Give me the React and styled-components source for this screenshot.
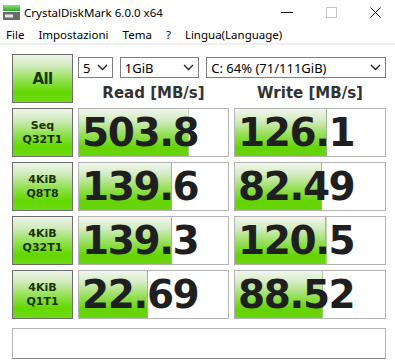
import React from 'react';
import styled, { createGlobalStyle } from 'styled-components';

const GlobalStyle = createGlobalStyle`
  html, body {
    margin: 0;
    padding: 0;
    background: #ffffff;
  }
  body {
    width: 395px;
    height: 363px;
    overflow: hidden;
    font-family: "Noto Sans", "Liberation Sans", sans-serif;
  }
`;

const Window = styled.div`
  width: 395px;
  height: 363px;
  background: #ffffff;
  display: flex;
  flex-direction: column;
`;

const TitleBar = styled.div`
  height: 25px;
  display: flex;
  align-items: center;
  padding-left: 3px;
`;

const Title = styled.span`
  margin-left: 4px;
  font-size: 11.5px;
  color: #000;
`;

const Caption = styled.div`
  margin-left: auto;
  display: flex;
  align-items: center;
  gap: 33px;
  padding-right: 14px;
`;

const MenuBar = styled.div`
  height: 18px;
  display: flex;
  align-items: center;
  gap: 14px;
  padding-left: 6px;
  border-bottom: 2px solid #f0f0f0;
`;

const MenuItem = styled.span`
  font-size: 11.5px;
  color: #000;
`;

const Main = styled.div`
  padding: 9px 0 0 12px;
`;

const Grid = styled.div`
  display: grid;
  grid-template-columns: 61px 151px 152px;
  grid-auto-rows: 49px;
  column-gap: 5px;
  row-gap: 5px;
`;

const GreenButton = styled.div`
  box-sizing: border-box;
  border: 1px solid #6e6e6e;
  background: linear-gradient(to bottom, #eef4ea 0%, #cdeab8 25%, #8ee04a 55%, #62d800 80%, #6fdb14 100%);
  display: flex;
  flex-direction: column;
  align-items: center;
  justify-content: center;
  font-family: "DejaVu Sans", Verdana, sans-serif;
  font-weight: bold;
  color: #1c3200;
  text-align: center;
`;

const AllButton = styled(GreenButton)`
  font-size: 15px;
  letter-spacing: -0.6px;
`;

const TestLabel = styled(GreenButton)`
  font-size: 11px;
  line-height: 14px;
`;

const Controls = styled.div`
  grid-column: 2 / 4;
  display: flex;
  flex-direction: column;
  padding-top: 3px;
`;

const ComboRow = styled.div`
  display: flex;
  gap: 6px;
`;

const Combo = styled.div`
  box-sizing: border-box;
  width: ${p => p.$w}px;
  height: 21px;
  border: 1px solid #7f7f7f;
  background: #fff;
  display: flex;
  align-items: center;
  padding: 0 4px 0 4px;
  font-size: 13px;
  color: #000;
  & + & {
    margin-left: ${p => p.$gap || 0}px;
  }
`;

const ComboText = styled.span`
  flex: 1;
  white-space: nowrap;
`;

const Headers = styled.div`
  margin-top: auto;
  display: grid;
  grid-template-columns: 151px 152px;
  column-gap: 5px;
`;

const Header = styled.div`
  text-align: center;
  font-family: "DejaVu Sans", Verdana, sans-serif;
  font-weight: bold;
  font-size: 15px;
  line-height: 20px;
  color: #333;
`;

const barGradient = 'linear-gradient(to bottom, #f2f6ee 0%, #d2ebc0 25%, #95de55 55%, #64d404 82%, #6ad50e 100%)';
const barEdge = 'linear-gradient(to right, transparent calc(100% - 1px), #9bb98a calc(100% - 1px))';

const Result = styled.div`
  box-sizing: border-box;
  border: 1px solid #b4b4b4;
  background-color: #fff;
  background-image: ${barEdge}, ${barGradient};
  background-repeat: no-repeat;
  background-size: ${p => p.$fill}% 100%, ${p => p.$fill}% 100%;
  display: flex;
  align-items: center;
  padding-left: 3px;
  font-family: "DejaVu Sans", Verdana, sans-serif;
  font-weight: bold;
  font-size: 39px;
  letter-spacing: -1.4px;
  color: #1f1f1f;
`;

const Comment = styled.div`
  box-sizing: border-box;
  margin-top: 9px;
  width: 374px;
  height: 31px;
  border: 1px solid #b4b4b4;
  border-bottom-color: #8a8a8a;
  background: #fff;
`;

const AppIcon = () => (
  <svg width="17" height="15" viewBox="0 0 17 15">
    <defs>
      <linearGradient id="ig" x1="0" y1="0" x2="0" y2="1">
        <stop offset="0" stopColor="#8fe07a" />
        <stop offset="1" stopColor="#2ea52e" />
      </linearGradient>
    </defs>
    <rect x="0" y="0" width="17" height="6" fill="url(#ig)" />
    <rect x="0" y="7" width="17" height="8" fill="#6b6b6b" />
    <rect x="2" y="9.5" width="8" height="3" fill="#e6e6e6" />
  </svg>
);

const Chevron = () => (
  <svg width="11" height="7" viewBox="0 0 11 7">
    <polyline points="1,1 5.5,5.5 10,1" fill="none" stroke="#222" strokeWidth="1.4" />
  </svg>
);

const rows = [
  { name: ['Seq', 'Q32T1'], read: '503.8', rf: 73.5, write: '126.1', wf: 61.5 },
  { name: ['4KiB', 'Q8T8'], read: '139.6', rf: 62.5, write: '82.49', wf: 58 },
  { name: ['4KiB', 'Q32T1'], read: '139.3', rf: 62.5, write: '120.5', wf: 61 },
  { name: ['4KiB', 'Q1T1'], read: '22.69', rf: 46.5, write: '88.52', wf: 58.5 },
];

function App() {
  return (
    <>
      <GlobalStyle />
      <Window>
        <TitleBar>
          <AppIcon />
          <Title>CrystalDiskMark 6.0.0 x64</Title>
          <Caption>
            <svg width="12" height="2" viewBox="0 0 12 2"><rect width="12" height="1" fill="#111" /></svg>
            <svg width="11" height="11" viewBox="0 0 11 11"><rect x="0.5" y="0.5" width="10" height="10" fill="none" stroke="#c4c4c4" /></svg>
            <svg width="11" height="11" viewBox="0 0 11 11"><path d="M0.5 0.5 L10.5 10.5 M10.5 0.5 L0.5 10.5" stroke="#111" strokeWidth="1" /></svg>
          </Caption>
        </TitleBar>
        <MenuBar>
          <MenuItem>File</MenuItem>
          <MenuItem>Impostazioni</MenuItem>
          <MenuItem>Tema</MenuItem>
          <MenuItem>?</MenuItem>
          <MenuItem>Lingua(Language)</MenuItem>
        </MenuBar>
        <Main>
          <Grid>
            <AllButton>All</AllButton>
            <Controls>
              <ComboRow>
                <Combo $w={35}><ComboText>5</ComboText><Chevron /></Combo>
                <Combo $w={80}><ComboText>1GiB</ComboText><Chevron /></Combo>
                <Combo $w={181} $gap={1}><ComboText>C: 64% (71/111GiB)</ComboText><Chevron /></Combo>
              </ComboRow>
              <Headers>
                <Header>Read [MB/s]</Header>
                <Header>Write [MB/s]</Header>
              </Headers>
            </Controls>
            {rows.map(r => (
              <React.Fragment key={r.name.join(' ')}>
                <TestLabel>{r.name[0]}<br />{r.name[1]}</TestLabel>
                <Result $fill={r.rf}>{r.read}</Result>
                <Result $fill={r.wf}>{r.write}</Result>
              </React.Fragment>
            ))}
          </Grid>
          <Comment />
        </Main>
      </Window>
    </>
  );
}

export default App;
